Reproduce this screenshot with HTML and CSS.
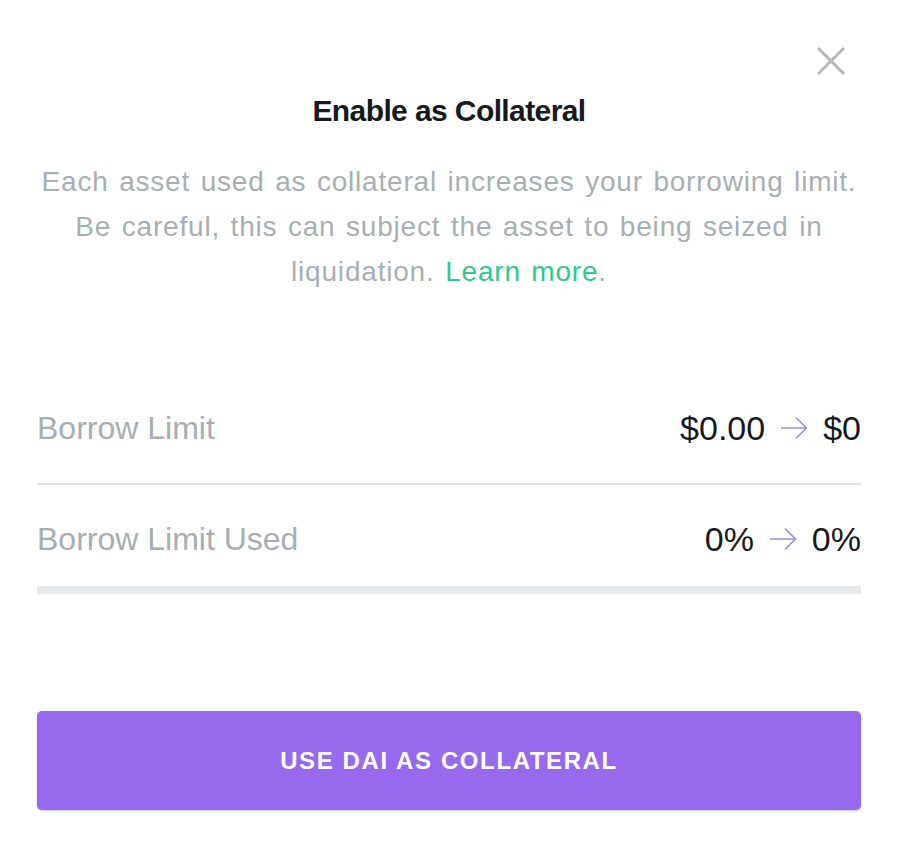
FILE: index.html
```html
<!DOCTYPE html>
<html>
<head>
<meta charset="utf-8">
<link rel="stylesheet" href="styles.css">
</head>
<body>
<div class="modal">
  <div class="header">
    <button class="close" aria-label="Close">
      <svg width="30" height="30" viewBox="0 0 30 30"><path d="M2 2 L28 28 M28 2 L2 28" stroke="#b3b6b8" stroke-width="3" fill="none"/></svg>
    </button>
    <h1 class="title">Enable as Collateral</h1>
  </div>
  <p class="desc">Each asset used as collateral increases your borrowing limit.<br>Be careful, this can subject the asset to being seized in<br>liquidation. <a class="link" href="#">Learn more</a>.</p>
  <div class="rows">
    <div class="row">
      <span class="label">Borrow Limit</span>
      <span class="value">$0.00 <svg class="arrow" width="28" height="24" viewBox="0 0 28 24"><path d="M1 12 H26.5 M16 1.5 L26.5 12 L16 22.5" stroke="#9d8ee0" stroke-width="1.6" fill="none"/></svg> $0</span>
    </div>
    <div class="divider"></div>
    <div class="row">
      <span class="label">Borrow Limit Used</span>
      <span class="value">0% <svg class="arrow" width="28" height="24" viewBox="0 0 28 24"><path d="M1 12 H26.5 M16 1.5 L26.5 12 L16 22.5" stroke="#9d8ee0" stroke-width="1.6" fill="none"/></svg> 0%</span>
    </div>
    <div class="bar"></div>
  </div>
  <button class="cta">USE DAI AS COLLATERAL</button>
</div>
</body>
</html>
```
FILE: styles.css
```css
html, body {
  margin: 0;
  padding: 0;
  background: #ffffff;
}
body {
  font-family: "Liberation Sans", Arial, sans-serif;
  width: 900px;
  height: 852px;
  overflow: hidden;
}
.modal {
  padding: 0 39px 0 37px;
  display: flex;
  flex-direction: column;
}
.header {
  position: relative;
  padding-top: 93px;
  text-align: center;
}
.close {
  position: absolute;
  right: 15px;
  top: 46px;
  background: none;
  border: 0;
  padding: 0;
  width: 30px;
  height: 30px;
  cursor: pointer;
}
.close svg { display: block; }
.title {
  margin: 0;
  font-size: 30px;
  line-height: 36px;
  font-weight: 700;
  letter-spacing: -0.6px;
  color: #16191d;
}
.desc {
  margin: 30px -20px 0 -20px;
  text-align: center;
  font-size: 28px;
  line-height: 45px;
  color: #a7afb2;
  letter-spacing: 0.8px;
  word-spacing: 2px;
}
.link {
  color: #2fc98c;
  text-decoration: none;
}
.rows {
  margin-top: 107px;
  display: flex;
  flex-direction: column;
}
.row {
  display: flex;
  justify-content: space-between;
  align-items: center;
  height: 54px;
}
.label {
  font-size: 32px;
  color: #a6aeb1;
}
.value {
  font-size: 34px;
  color: #16191d;
  display: flex;
  align-items: center;
  gap: 15px;
}
.arrow { display: block; }
.divider {
  height: 2px;
  background: #e3e5e6;
  margin: 28px 0 27px;
}
.bar {
  height: 8px;
  background: #e6e8ea;
  margin-top: 20px;
  border-radius: 1px;
}
.cta {
  margin-top: 117px;
  height: 99px;
  border: 0;
  border-radius: 5px;
  background: #9669ed;
  color: #ffffff;
  font-family: "Liberation Sans", Arial, sans-serif;
  font-weight: 700;
  font-size: 24px;
  letter-spacing: 1.6px;
  box-shadow: 0 1px 2px rgba(80, 40, 160, 0.3);
}
```
